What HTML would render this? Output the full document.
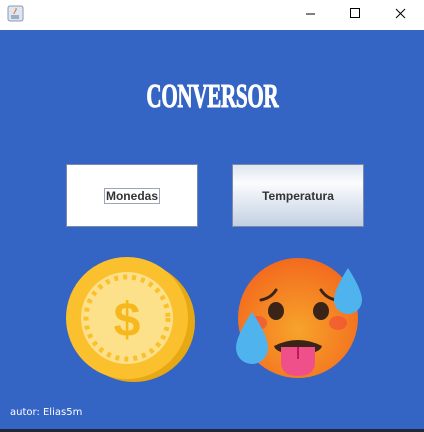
<!DOCTYPE html>
<html><head><style>
*{margin:0;padding:0;box-sizing:border-box}
body{width:424px;height:432px;position:relative;overflow:hidden;background:#3464c4;font-family:"Liberation Sans",sans-serif}
.tb{position:absolute;left:0;top:0;width:424px;height:30px;background:#fff}
.title{position:absolute;left:0;width:424px;top:78px;text-align:center;color:#fff;font-family:"Liberation Serif",serif;font-weight:bold;font-size:34px;}
.title span{display:inline-block;transform:scaleX(0.62);letter-spacing:-0.5px;-webkit-text-stroke:1px #fff}
.btn{position:absolute;top:164px;width:132px;height:63px;border:1px solid #7a8aa8;font-weight:bold;font-size:12px;color:#333;display:flex;align-items:center;justify-content:center}
.b1{left:66px;background:#fff}
.b1 span{border:1px solid #9aa6b8;padding:0 1px}
.b2{left:232px;background:linear-gradient(#dfe6ef 0%,#fbfcfd 30%,#e6ecf4 55%,#c3d1e3 100%)}
.aut{position:absolute;left:10px;top:407px;color:#fff;font-size:10px;font-family:"DejaVu Sans",sans-serif}
.bot{position:absolute;left:0;top:429px;width:424px;height:3px;background:#222838}
</style></head><body>
<div class="tb">
<svg width="424" height="30">
<rect x="8" y="6" width="15" height="15" rx="2" fill="#dfe6f0" stroke="#8a9ab0"/>
<path d="M11 16h8M11 18h8" stroke="#5577aa"/><path d="M14 14c0-3 3-3 2-6" stroke="#e07020" fill="none"/>
<path d="M306 14h9" stroke="#000"/>
<rect x="350.5" y="8.5" width="9" height="9" fill="none" stroke="#000"/>
<path d="M396 9l9 9M405 9l-9 9" stroke="#000"/>
</svg></div>
<div class="title"><span>CONVERSOR</span></div>
<div class="btn b1"><span>Monedas</span></div>
<div class="btn b2">Temperatura</div>
<svg style="position:absolute;left:0;top:0" width="424" height="432">
<ellipse cx="134" cy="322" rx="61" ry="60" fill="#e6a813"/>
<circle cx="127" cy="318" r="61" fill="#fbc02d"/>
<circle cx="127" cy="318" r="46" fill="#fde08a"/>
<circle cx="127" cy="318" r="41" fill="none" stroke="#fbc02d" stroke-width="5" stroke-dasharray="4 5"/>
<text x="127" y="336" text-anchor="middle" font-family="Liberation Sans" font-weight="bold" font-size="48" fill="#f6b81c">$</text>
<defs><radialGradient id="f" cx="0.5" cy="0.6" r="0.6"><stop offset="0" stop-color="#f7a42a"/><stop offset="1" stop-color="#f36a1e"/></radialGradient></defs>
<circle cx="298" cy="318" r="60" fill="url(#f)"/>
<ellipse cx="258" cy="323" rx="9" ry="7" fill="#f04a3a" opacity="0.6"/>
<ellipse cx="338" cy="323" rx="9" ry="7" fill="#f04a3a" opacity="0.6"/>
<path d="M261 300q10-2 15-10M321 290q5 8 15 10" stroke="#3a2418" stroke-width="3" fill="none" stroke-linecap="round"/>
<ellipse cx="276" cy="311" rx="8" ry="9" fill="#3a2418"/>
<ellipse cx="321" cy="311" rx="8" ry="9" fill="#3a2418"/>
<path d="M274 346q24-12 48 0q-2 8-24 8q-22 0-24-8z" fill="#3a2418"/>
<path d="M281 347h34v15q0 14-17 14q-17 0-17-14z" fill="#f0508a"/>
<path d="M298 347v12" stroke="#c2185b" stroke-width="2"/>
<path d="M348 268q-14 22-14 32a14 14 0 0 0 28 0q0-10-14-32z" fill="#4fb4ee"/>
<path d="M252 312q-16 24-16 36a16 16 0 0 0 32 0q0-12-16-36z" fill="#4fb4ee"/>
</svg>
<div class="aut">autor: Elias5m</div>
<div class="bot"></div>
</body></html>
